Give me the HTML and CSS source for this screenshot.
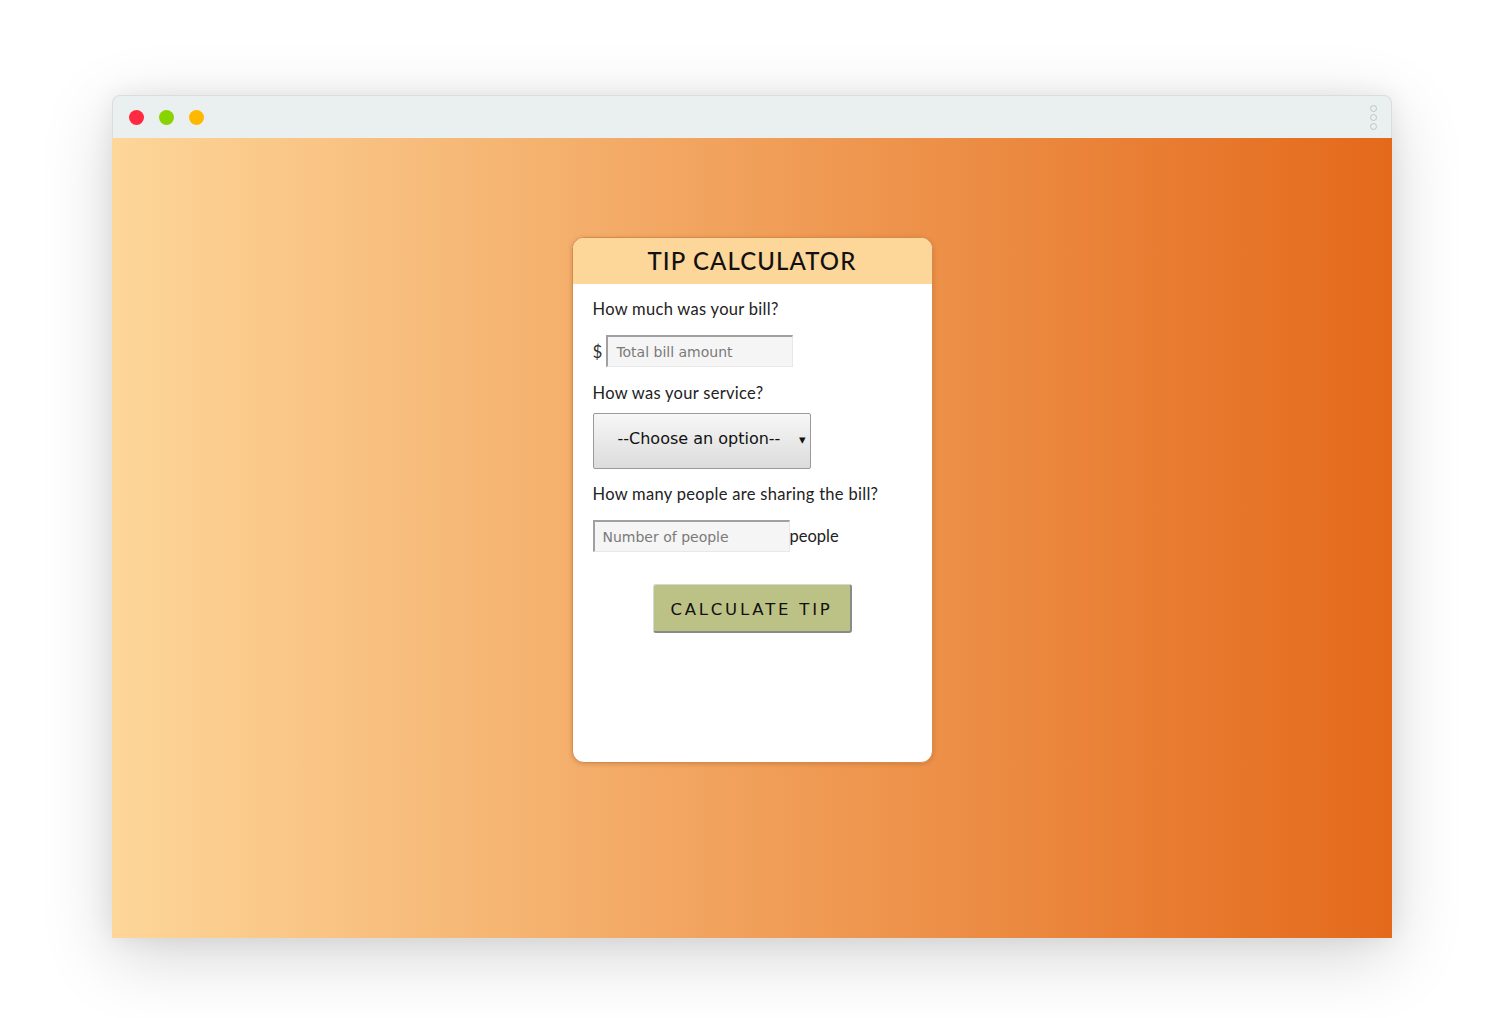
FILE: index.html
```html
<!DOCTYPE html>
<html>
<head>
<meta charset="utf-8">
<link rel="stylesheet" href="styles.css">
</head>
<body>
<div class="stage">
  <div class="window">
    <div class="titlebar">
      <div class="dots">
        <span class="dot red"></span>
        <span class="dot green"></span>
        <span class="dot yellow"></span>
      </div>
      <div class="menu">
        <span></span><span></span><span></span>
      </div>
    </div>
    <div class="content">
      <div class="card">
        <div class="card-head">
          <h1>TIP CALCULATOR</h1>
        </div>
        <div class="card-body">
          <p class="label">How much was your bill?</p>
          <div class="row">
            <span class="dollar">$</span>
            <input class="field bill" type="text" placeholder="Total bill amount">
          </div>
          <p class="label">How was your service?</p>
          <div class="select">
            <span class="select-text">--Choose an option--</span>
            <span class="caret">&#9662;</span>
          </div>
          <p class="label">How many people are sharing the bill?</p>
          <div class="row">
            <input class="field people" type="text" placeholder="Number of people">
            <span class="people-word">people</span>
          </div>
          <div class="btn-wrap">
            <button class="calc">CALCULATE TIP</button>
          </div>
        </div>
      </div>
    </div>
  </div>
</div>
</body>
</html>
```
FILE: styles.css
```css
html, body {
  margin: 0;
  padding: 0;
  background: #ffffff;
}
.stage {
  padding: 95px 112px 0 112px;
  height: 1018px;
  box-sizing: border-box;
}
.window {
  width: 1280px;
  height: 843px;
  display: flex;
  flex-direction: column;
  border-radius: 8px 8px 0 0;
  box-shadow: 0 18px 70px rgba(0,0,0,0.17), 0 0 24px rgba(0,0,0,0.07);
}
.titlebar {
  height: 42px;
  background: #eaf0f0;
  border: 1px solid #dcdcdc;
  border-bottom: none;
  border-radius: 8px 8px 0 0;
  display: flex;
  align-items: center;
  justify-content: space-between;
  padding: 0 14px 0 16px;
}
.dots {
  display: flex;
  gap: 15px;
}
.dot {
  width: 15px;
  height: 15px;
  border-radius: 50%;
  display: block;
}
.red { background: #ff2a3f; }
.green { background: #89d300; }
.yellow { background: #ffb800; }
.menu {
  display: flex;
  flex-direction: column;
  gap: 2px;
}
.menu span {
  width: 7px;
  height: 7px;
  border: 1.5px solid #bfc4c6;
  border-radius: 50%;
  box-sizing: border-box;
  display: block;
}
.content {
  flex: 1;
  background: linear-gradient(to right, #fdd699 0%, #e4691b 100%);
  display: flex;
  justify-content: center;
  align-items: flex-start;
  padding-top: 99px;
}
.card {
  width: 359px;
  height: 524px;
  background: #ffffff;
  border: 1px solid #d78a4c;
  border-radius: 12px;
  overflow: hidden;
  box-shadow: 0 1px 4px rgba(150,80,20,0.35);
}
.card-head {
  height: 46px;
  background: #fdd699;
  display: flex;
  align-items: center;
  justify-content: center;
}
.card-head h1 {
  margin: 0 0 1px 0;
  font-family: "Lato", "DejaVu Sans", sans-serif;
  font-weight: 500;
  font-size: 24px;
  letter-spacing: 1.1px;
  color: #111;
}
.card-body {
  padding: 14px 20px 0 20px;
  display: flex;
  flex-direction: column;
  font-family: "Lato", "DejaVu Sans", sans-serif;
  color: #222;
}
.label {
  margin: 0;
  font-size: 16.5px;
  line-height: 22px;
  letter-spacing: 0.3px;
}
.row {
  display: flex;
  align-items: center;
  margin: 15px 0 15px 0;
}
.dollar {
  font-size: 17px;
  margin-right: 4px;
  color: #333;
}
.field {
  height: 32px;
  box-sizing: border-box;
  background: #f5f5f5;
  border-style: solid;
  border-width: 2px 1px 1px 2px;
  border-color: #a0a0a0 #e8e8e8 #e8e8e8 #a0a0a0;
  font-family: "DejaVu Sans", sans-serif;
  font-size: 14px;
  padding: 0 8px;
  outline: none;
}
.field::placeholder { color: #7a7a7a; }
.bill { width: 187px; }
.people { width: 197px; }
.people-word {
  font-size: 16.5px;
  color: #222;
}
.select {
  width: 218px;
  height: 56px;
  box-sizing: border-box;
  margin: 9px 0 14px 0;
  border: 1px solid #9a9a9a;
  border-radius: 2px;
  background: linear-gradient(to bottom, #f7f7f7 0%, #dcdcdc 100%);
  display: flex;
  align-items: center;
  padding-bottom: 6px;
  position: relative;
  font-family: "DejaVu Sans", sans-serif;
  font-size: 16px;
  color: #111;
}
.select-text {
  margin-left: 24px;
}
.caret {
  position: absolute;
  right: 4px;
  top: 18px;
  font-size: 13px;
}
.btn-wrap {
  display: flex;
  justify-content: center;
  margin-top: 17px;
}
.calc {
  width: 199px;
  height: 49px;
  background: #bcc286;
  border-style: solid;
  border-width: 1px 2px 2px 1px;
  border-color: #d7d7d7 #8a8a8a #8a8a8a #d7d7d7;
  border-radius: 3px;
  font-family: "DejaVu Sans", sans-serif;
  font-size: 16.5px;
  letter-spacing: 2.8px;
  color: #111;
  padding: 2px 0 0 0;
}
```
